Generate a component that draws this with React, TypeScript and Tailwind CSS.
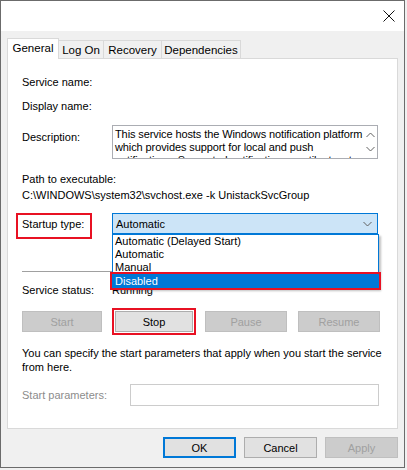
import { useState } from 'react'

const font = { fontFamily: '"Liberation Sans", Arial, sans-serif' }

function Chevron({ up = false }: { up?: boolean }) {
  return (
    <svg width="9" height="6" viewBox="0 0 9 6" className="block">
      <path
        d={up ? 'M0.5 5 L4.5 1 L8.5 5' : 'M0.5 1 L4.5 5 L8.5 1'}
        fill="none"
        stroke="#606060"
        strokeWidth="1"
      />
    </svg>
  )
}

function Btn({
  label,
  width = 'w-[80px]',
  disabled = false,
}: {
  label: string
  width?: string
  disabled?: boolean
}) {
  return (
    <div
      className={`${width} h-[21px] flex items-center justify-center border ${
        disabled
          ? 'bg-[#cccccc] border-[#bfbfbf] text-[#a0a0a0]'
          : 'bg-[#e1e1e1] border-[#adadad] text-black'
      }`}
    >
      {label}
    </div>
  )
}

export default function App() {
  const [startup] = useState('Automatic')
  const options = ['Automatic (Delayed Start)', 'Automatic', 'Manual', 'Disabled']

  return (
    <div className="w-[407px] h-[470px] bg-[#f0f0f0] text-[11px] leading-[16px] text-black whitespace-nowrap" style={font}>
      <div className="w-[405px] h-[468px] border border-[#6b6b6b] bg-[#f0f0f0] flex flex-col">
        {/* title bar */}
        <div className="h-[30px] bg-white flex justify-end items-center pr-[9px]">
          <svg width="12" height="12" viewBox="0 0 12 12">
            <path d="M0.5 0.5 L11.5 11.5 M11.5 0.5 L0.5 11.5" stroke="#111" strokeWidth="1" />
          </svg>
        </div>

        {/* tabs */}
        <div className="flex items-end h-[27px] pl-[6px]">
          <div className="h-[21px] w-[52px] bg-white border border-b-0 border-[#d9d9d9] flex items-start justify-center pt-[1px] relative top-[1px] z-10 text-[11.5px]">
            General
          </div>
          <div className="h-[18px] w-[45px] border border-l-0 border-b-0 border-[#d9d9d9] flex items-center justify-center text-[11.5px]">
            Log On
          </div>
          <div className="h-[18px] w-[58px] border border-l-0 border-b-0 border-[#d9d9d9] flex items-center justify-center text-[11.5px]">
            Recovery
          </div>
          <div className="h-[18px] w-[79px] border border-l-0 border-b-0 border-[#d9d9d9] flex items-center justify-center text-[11.5px]">
            Dependencies
          </div>
        </div>

        {/* panel */}
        <div className="ml-[6px] w-[391px] h-[371px] bg-white border border-[#d9d9d9] px-[14px] pt-[15px] flex flex-col">
          <div>Service name:</div>
          <div className="mt-[8px]">Display name:</div>

          <div className="mt-[11px] flex">
            <div className="w-[90px] pt-[4px]">Description:</div>
            <div className="w-[266px] h-[34px] border border-[#abadb3] flex overflow-hidden">
              <div className="flex-1 pl-[2px] leading-[13px] pt-[2px] overflow-hidden whitespace-normal tracking-[-0.1px]">
                This service hosts the Windows notification platform which provides support for local and push
                notifications. Supported notifications are tile, toast and raw.
              </div>
              <div className="w-[14px] shrink-0 flex flex-col items-center justify-between py-[6px]">
                <Chevron up />
                <Chevron />
              </div>
            </div>
          </div>

          <div className="mt-[12px]">Path to executable:</div>
          <div>C:\WINDOWS\system32\svchost.exe -k UnistackSvcGroup</div>

          <div className="mt-[10px] flex relative">
            <div className="w-[90px] h-[21px] flex items-center">
              <div className="border-2 border-[#e81123] w-[76px] h-[26px] -ml-[6px] mt-[4px] pl-[4px] pt-[1px] flex items-start">
                Startup type:
              </div>
            </div>
            <div className="w-[266px] h-[21px] bg-[#cce4f7] border border-[#0078d7] flex items-center justify-between pl-[3px] pr-[5px]">
              <span>{startup}</span>
              <Chevron />
            </div>

            {/* open list */}
            <div className="absolute left-[90px] top-[21px] w-[267px] bg-white border border-[#0078d7] leading-[13px] z-20 shadow-[2px_2px_2px_rgba(0,0,0,0.25)]">
              {options.map((o, i) =>
                i === options.length - 1 ? (
                  <div key={o} className="relative">
                    <div className="bg-[#0078d7] text-white h-[14px] pl-[2px] leading-[14px]">{o}</div>
                    <div className="absolute -left-[3px] -right-[3px] -top-[2px] -bottom-[2px] border-2 border-[#e81123]" />
                  </div>
                ) : (
                  <div key={o} className="h-[13px] pl-[2px]">
                    {o}
                  </div>
                )
              )}
            </div>
          </div>

          <div className="mt-[37px] w-[90px] h-px bg-[#a0a0a0]" />

          <div className="mt-[10px] flex">
            <div className="w-[90px]">Service status:</div>
            <div>Running</div>
          </div>

          <div className="mt-[10px] flex items-center">
            <Btn label="Start" disabled width="w-[80px]" />
            <div className="ml-[10px] border-2 border-[#e81123] p-[1px]">
              <Btn label="Stop" width="w-[78px]" />
            </div>
            <div className="ml-[9px]">
              <Btn label="Pause" disabled width="w-[82px]" />
            </div>
            <div className="ml-[11px]">
              <Btn label="Resume" disabled width="w-[82px]" />
            </div>
          </div>

          <div className="mt-[11px] leading-[14px]">
            You can specify the start parameters that apply when you start the service
            <br />
            from here.
          </div>

          <div className="mt-[10px] flex items-center">
            <div className="w-[108px] text-[#8c8c8c]">Start parameters:</div>
            <div className="w-[249px] h-[22px] border border-[#cccccc] bg-white" />
          </div>
        </div>

        {/* bottom buttons */}
        <div className="mt-[8px] flex justify-end gap-[8px] pr-[6px]">
          <div className="w-[73px] h-[21px] border-2 border-[#0078d7] bg-[#e1e1e1] flex items-center justify-center">
            OK
          </div>
          <Btn label="Cancel" width="w-[73px]" />
          <Btn label="Apply" disabled width="w-[73px]" />
        </div>
      </div>
    </div>
  )
}
